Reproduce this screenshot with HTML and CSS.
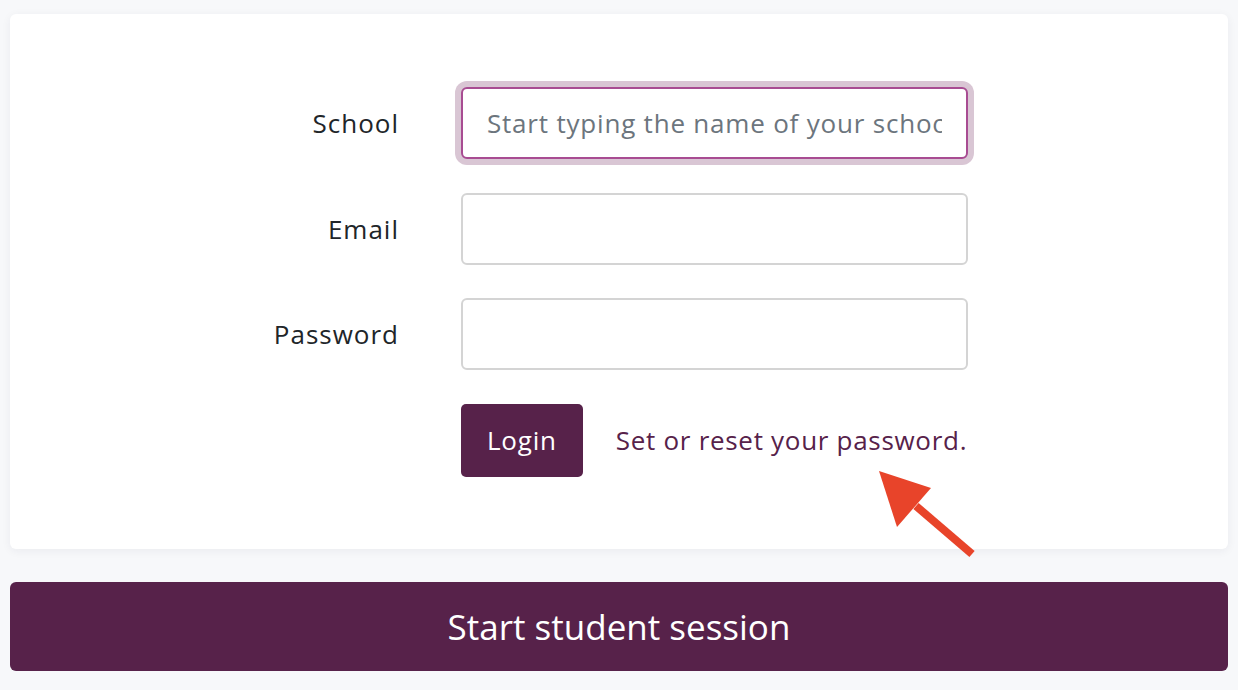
FILE: index.html
```html
<!DOCTYPE html>
<html lang="en">
<head>
    <meta charset="UTF-8">
    <meta name="viewport" content="width=device-width, initial-scale=1.0">
    <title>Login</title>
    <link rel="stylesheet" href="styles.css">
</head>
<body>
    <div class="card">
        <form class="login-form">
            <label class="label" for="school">School</label>
            <input class="field focused" id="school" type="text" placeholder="Start typing the name of your school">

            <label class="label" for="email">Email</label>
            <input class="field" id="email" type="email">

            <label class="label" for="password">Password</label>
            <input class="field" id="password" type="password">

            <div class="actions">
                <button type="button" class="btn-login">Login</button>
                <a href="#" class="reset-link">Set or reset your password.</a>
            </div>
        </form>
        <svg class="arrow" width="110" height="100" viewBox="0 0 110 100">
            <line x1="40" y1="40" x2="96" y2="88" stroke="#e8442a" stroke-width="8"/>
            <polygon points="3,5 55,22 21,61" fill="#e8442a"/>
        </svg>
    </div>
    <button type="button" class="btn-session">Start student session</button>
</body>
</html>
```

FILE: styles.css
```css
body {
    margin: 0;
    padding: 14px 10px 0;
    background: #f7f8fa;
    font-family: "Open Sans", "Noto Sans", sans-serif;
    color: #212529;
}

.card {
    position: relative;
    background: #fff;
    border-radius: 6px;
    box-shadow: 0 2px 10px rgba(30, 40, 60, 0.06);
    padding: 73px 0 72px;
}

.login-form {
    display: grid;
    grid-template-columns: 389px 507px;
    column-gap: 62px;
    row-gap: 33.5px;
    align-items: center;
}

.label {
    text-align: right;
    font-size: 26px;
    letter-spacing: 1px;
}

.field {
    box-sizing: border-box;
    height: 72px;
    width: 100%;
    border: 2px solid #d4d4d4;
    border-radius: 6px;
    padding: 0 24px;
    font-family: inherit;
    font-size: 26px;
    letter-spacing: 0.8px;
    color: #212529;
    outline: none;
}

.field::placeholder {
    color: #6c757d;
}

.focused {
    border-color: #a84c92;
    box-shadow: 0 0 0 6px #d9c6d4;
}

.actions {
    grid-column: 2;
    display: flex;
    align-items: center;
    gap: 33px;
}

.btn-login {
    height: 73px;
    padding: 0 26px;
    background: #57224a;
    color: #fff;
    border: none;
    border-radius: 5px;
    font-family: inherit;
    font-size: 26px;
    letter-spacing: 0.8px;
}

.reset-link {
    color: #57224a;
    text-decoration: none;
    font-size: 26px;
    letter-spacing: 0.7px;
}

.arrow {
    position: absolute;
    left: 866px;
    top: 452px;
}

.btn-session {
    display: block;
    width: 100%;
    height: 89px;
    margin-top: 33px;
    background: #57224a;
    color: #fff;
    border: none;
    border-radius: 6px;
    font-family: inherit;
    font-size: 35px;
}
```
